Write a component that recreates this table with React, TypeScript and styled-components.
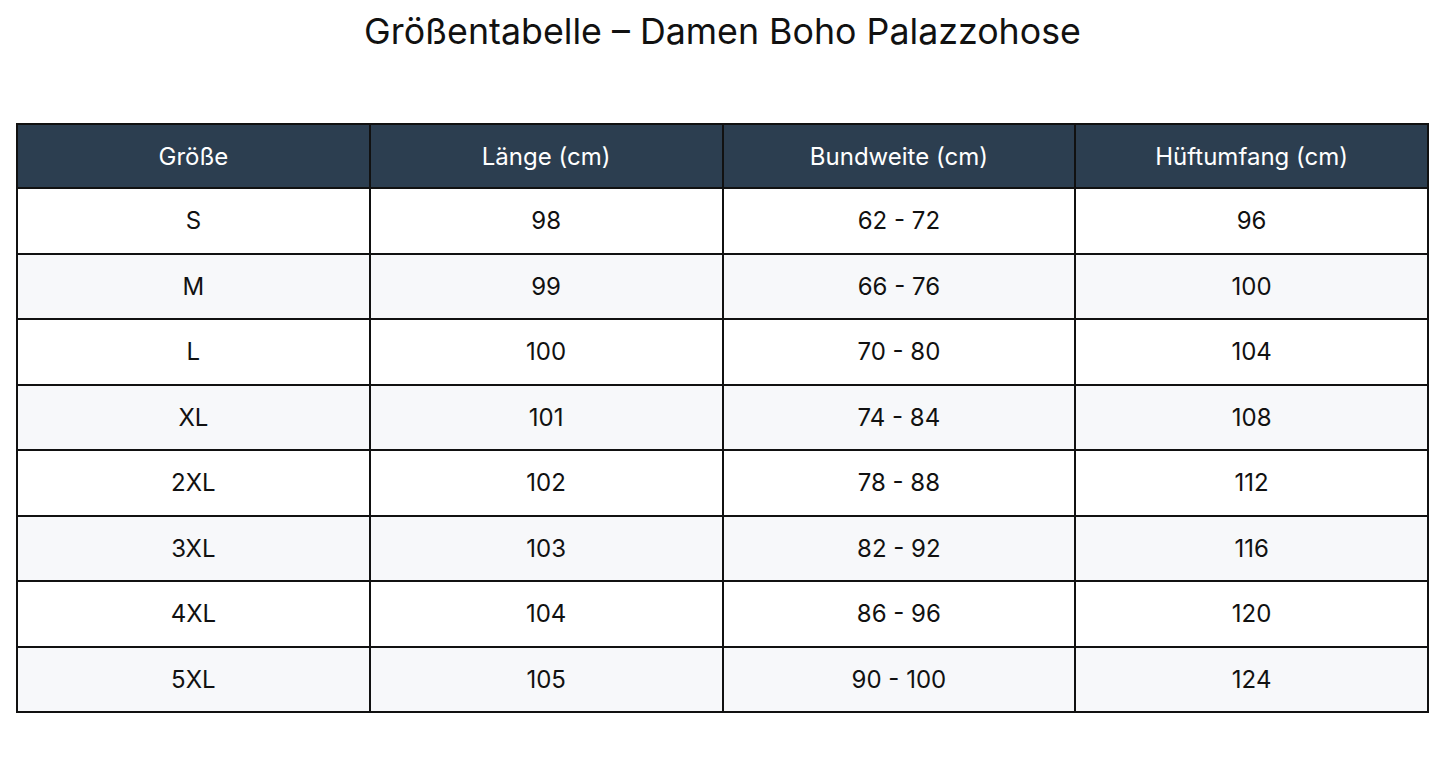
import React from "react";
import styled, { createGlobalStyle } from "styled-components";

const GlobalStyle = createGlobalStyle`
  html, body { margin: 0; padding: 0; background: #ffffff; }
  body { font-family: "Inter", "Liberation Sans", sans-serif; color: #111; }
`;

const Page = styled.div`
  padding: 0 16px;
  display: flex;
  flex-direction: column;
  align-items: stretch;
`;

const Title = styled.h1`
  margin: 0;
  height: 123px;
  padding-top: 9px;
  box-sizing: border-box;
  text-align: center;
  font-size: 35.75px;
  line-height: 44px;
  font-weight: 400;
  color: #111;
`;

const Table = styled.table`
  width: 1413px;
  border-collapse: collapse;
  table-layout: fixed;
  border: 2px solid #111;
`;

const HeadCell = styled.th`
  height: 62px;
  padding: 0;
  background: #2c3e50;
  color: #ffffff;
  font-weight: 400;
  font-size: 24px;
  text-align: center;
  border: 2px solid #111;
`;

const Row = styled.tr<{ $alt: boolean }>`
  background: ${(p) => (p.$alt ? "#f7f8fa" : "#ffffff")};
`;

const Cell = styled.td`
  height: 63.5px;
  padding: 0;
  font-size: 24px;
  text-align: center;
  color: #111;
  border: 2px solid #111;
`;

const headers = ["Größe", "Länge (cm)", "Bundweite (cm)", "Hüftumfang (cm)"];
const rows = [
  ["S", "98", "62 - 72", "96"],
  ["M", "99", "66 - 76", "100"],
  ["L", "100", "70 - 80", "104"],
  ["XL", "101", "74 - 84", "108"],
  ["2XL", "102", "78 - 88", "112"],
  ["3XL", "103", "82 - 92", "116"],
  ["4XL", "104", "86 - 96", "120"],
  ["5XL", "105", "90 - 100", "124"],
];

export default function App() {
  return (
    <Page>
      <GlobalStyle />
      <Title>Größentabelle – Damen Boho Palazzohose</Title>
      <Table>
        <thead>
          <tr>
            {headers.map((h) => (
              <HeadCell key={h}>{h}</HeadCell>
            ))}
          </tr>
        </thead>
        <tbody>
          {rows.map((r, i) => (
            <Row key={r[0]} $alt={i % 2 === 1}>
              {r.map((c, j) => (
                <Cell key={j}>{c}</Cell>
              ))}
            </Row>
          ))}
        </tbody>
      </Table>
    </Page>
  );
}
